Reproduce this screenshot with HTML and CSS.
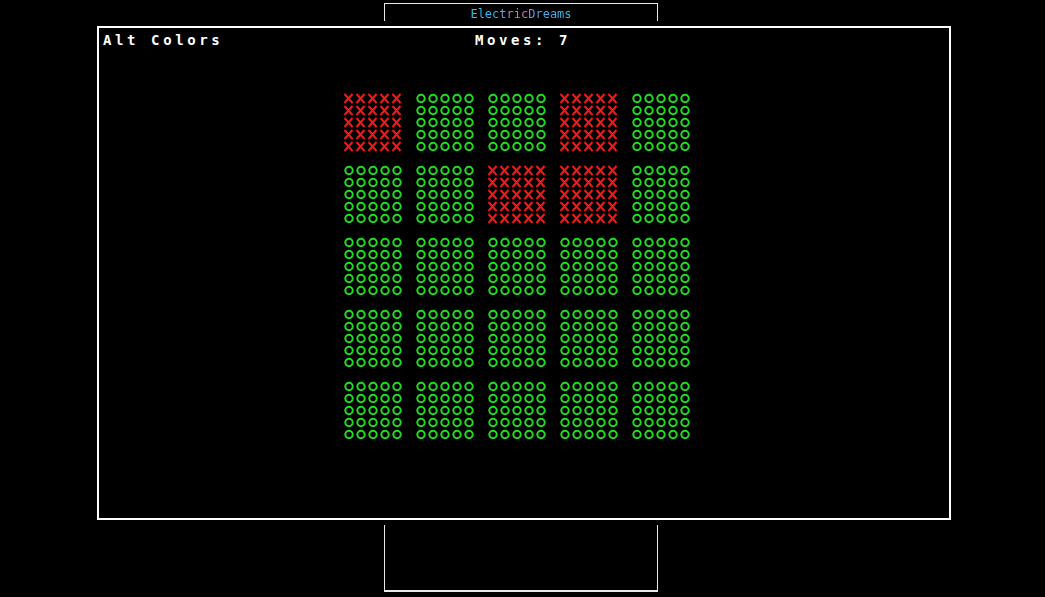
FILE: index.html
```html
<!DOCTYPE html>
<html lang="en">
<head>
    <meta charset="UTF-8">
    <meta name="viewport" content="width=device-width, initial-scale=1.0">
    <title>ElectricDreams - Alt Colors</title>
    <link rel="stylesheet" href="styles.css">
</head>
<body>
    <!-- shared tile patterns for the board -->
    <svg class="defs" width="0" height="0" aria-hidden="true">
        <defs>
            <pattern id="tileOn" width="12" height="12" patternUnits="userSpaceOnUse">
                <circle cx="6" cy="5.5" r="3.7" fill="none" stroke="#1fe01f" stroke-width="2"/>
            </pattern>
            <pattern id="tileOff" width="12" height="12" patternUnits="userSpaceOnUse">
                <path d="M1.5 1 L9.5 10 M9.5 1 L1.5 10" stroke="#ff1414" stroke-width="2" fill="none"/>
            </pattern>
        </defs>
    </svg>

    <div class="page">
        <div class="banner">
            <span class="brand">ElectricDreams</span>
        </div>

        <div class="screen">
            <div class="hud">
                <span class="mode">Alt Colors</span>
                <span class="moves">Moves: 7</span>
                <span></span>
            </div>

            <div class="board">
                <svg class="cell" width="60" height="60"><rect width="60" height="60" fill="url(#tileOff)"/></svg>
                <svg class="cell" width="60" height="60"><rect width="60" height="60" fill="url(#tileOn)"/></svg>
                <svg class="cell" width="60" height="60"><rect width="60" height="60" fill="url(#tileOn)"/></svg>
                <svg class="cell" width="60" height="60"><rect width="60" height="60" fill="url(#tileOff)"/></svg>
                <svg class="cell" width="60" height="60"><rect width="60" height="60" fill="url(#tileOn)"/></svg>

                <svg class="cell" width="60" height="60"><rect width="60" height="60" fill="url(#tileOn)"/></svg>
                <svg class="cell" width="60" height="60"><rect width="60" height="60" fill="url(#tileOn)"/></svg>
                <svg class="cell" width="60" height="60"><rect width="60" height="60" fill="url(#tileOff)"/></svg>
                <svg class="cell" width="60" height="60"><rect width="60" height="60" fill="url(#tileOff)"/></svg>
                <svg class="cell" width="60" height="60"><rect width="60" height="60" fill="url(#tileOn)"/></svg>

                <svg class="cell" width="60" height="60"><rect width="60" height="60" fill="url(#tileOn)"/></svg>
                <svg class="cell" width="60" height="60"><rect width="60" height="60" fill="url(#tileOn)"/></svg>
                <svg class="cell" width="60" height="60"><rect width="60" height="60" fill="url(#tileOn)"/></svg>
                <svg class="cell" width="60" height="60"><rect width="60" height="60" fill="url(#tileOn)"/></svg>
                <svg class="cell" width="60" height="60"><rect width="60" height="60" fill="url(#tileOn)"/></svg>

                <svg class="cell" width="60" height="60"><rect width="60" height="60" fill="url(#tileOn)"/></svg>
                <svg class="cell" width="60" height="60"><rect width="60" height="60" fill="url(#tileOn)"/></svg>
                <svg class="cell" width="60" height="60"><rect width="60" height="60" fill="url(#tileOn)"/></svg>
                <svg class="cell" width="60" height="60"><rect width="60" height="60" fill="url(#tileOn)"/></svg>
                <svg class="cell" width="60" height="60"><rect width="60" height="60" fill="url(#tileOn)"/></svg>

                <svg class="cell" width="60" height="60"><rect width="60" height="60" fill="url(#tileOn)"/></svg>
                <svg class="cell" width="60" height="60"><rect width="60" height="60" fill="url(#tileOn)"/></svg>
                <svg class="cell" width="60" height="60"><rect width="60" height="60" fill="url(#tileOn)"/></svg>
                <svg class="cell" width="60" height="60"><rect width="60" height="60" fill="url(#tileOn)"/></svg>
                <svg class="cell" width="60" height="60"><rect width="60" height="60" fill="url(#tileOn)"/></svg>
            </div>
        </div>

        <div class="tray"></div>
    </div>
</body>
</html>
```

FILE: styles.css
```css
body {
    background-color: #000;
    color: #fff;
    font-family: "DejaVu Sans Mono", "Liberation Mono", monospace;
    margin: 0;
    overflow: hidden;
}
.defs {
    position: absolute;
}
.page {
    display: flex;
    flex-direction: column;
    align-items: flex-start;
    padding: 3px 0 0 97px;
}
.banner {
    width: 272px;
    height: 17px;
    margin-left: 287px;
    border: 1px solid #e8e8e8;
    border-bottom: none;
    display: flex;
    justify-content: center;
    align-items: flex-end;
}
.brand {
    font-size: 12px;
    line-height: 14px;
    background: linear-gradient(90deg, #2ec6f2 0%, #3cb8ee 28%, #e46cc6 42%, #e070c8 54%, #5c9ef0 64%, #33c2f0 100%);
    -webkit-background-clip: text;
    background-clip: text;
    color: transparent;
}
.screen {
    width: 850px;
    height: 490px;
    margin-top: 5px;
    border: 2px solid #fff;
}
.hud {
    display: grid;
    grid-template-columns: 1fr auto 1fr;
    padding: 3px 6px 0 4px;
    font-size: 14px;
    font-weight: bold;
    line-height: 18px;
    letter-spacing: 3.6px;
}
.board {
    display: grid;
    grid-template-columns: repeat(5, 72px);
    grid-auto-rows: 72px;
    justify-content: center;
    margin: 44px 0 0 -3px;
}
.cell {
    display: block;
    shape-rendering: crispEdges;
}
.tray {
    width: 272px;
    height: 65px;
    margin: 5px 0 0 287px;
    border: 1px solid #e8e8e8;
    border-top: none;
    border-bottom-width: 2px;
}
```
